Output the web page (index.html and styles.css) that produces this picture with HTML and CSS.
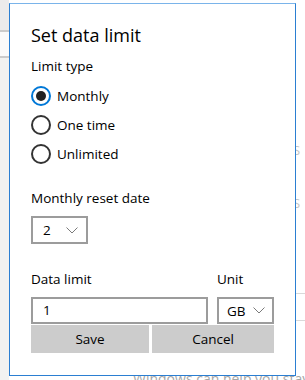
FILE: index.html
```html
<!DOCTYPE html>
<html lang="en">
<head>
    <meta charset="UTF-8">
    <meta name="viewport" content="width=device-width, initial-scale=1.0">
    <title>Set data limit</title>
    <link rel="stylesheet" href="styles.css">
</head>
<body>
    <div class="desktop">
        <div class="backdrop">
            <div class="bg-left">
                <div class="bg-band"></div>
                <div class="bg-line"></div>
                <div class="bg-white"></div>
                <div class="bg-line"></div>
                <div class="bg-rest"></div>
            </div>
            <div class="bg-right">
                <span class="ghost ghost-1">S</span>
                <span class="ghost ghost-2">S</span>
                <div class="rule rule-1"></div>
                <div class="rule rule-2"></div>
                <p class="bg-text">Windows can help you stay u</p>
            </div>
        </div>

        <div class="dialog">
            <h1>Set data limit</h1>

            <div class="label">Limit type</div>
            <div class="radios">
                <label class="radio checked"><span class="dot"></span>Monthly</label>
                <label class="radio"><span class="dot"></span>One time</label>
                <label class="radio"><span class="dot"></span>Unlimited</label>
            </div>

            <div class="label reset-label">Monthly reset date</div>
            <div class="select day-select">
                <span>2</span>
                <svg class="chevron" width="12" height="7" viewBox="0 0 12 7"><path d="M0.5 0.5 L6 6 L11.5 0.5" fill="none" stroke="#7a7a7a" stroke-width="1"/></svg>
            </div>

            <div class="limit-row labels">
                <div class="label">Data limit</div>
                <div class="label">Unit</div>
            </div>
            <div class="limit-row">
                <div class="textbox">1</div>
                <div class="select unit-select">
                    <span>GB</span>
                    <svg class="chevron" width="12" height="7" viewBox="0 0 12 7"><path d="M0.5 0.5 L6 6 L11.5 0.5" fill="none" stroke="#7a7a7a" stroke-width="1"/></svg>
                </div>
            </div>
            <div class="buttons">
                <button>Save</button>
                <button>Cancel</button>
            </div>
        </div>
    </div>
</body>
</html>
```

FILE: styles.css
```css
body {
    margin: 0;
    padding: 0;
    font-family: "Segoe UI", "Open Sans", sans-serif;
    color: #000;
}
.desktop {
    position: relative;
    width: 305px;
    height: 380px;
    overflow: hidden;
    background: #fff;
}
.backdrop {
    display: flex;
    height: 100%;
}
.bg-left {
    width: 9px;
    display: flex;
    flex-direction: column;
}
.bg-band {
    height: 30px;
    background: #ebebeb;
}
.bg-line {
    height: 2px;
    background: #cbcbcb;
}
.bg-white {
    height: 24px;
    background: #fafafa;
}
.bg-rest {
    flex: 1;
    background: #f1f2f1;
}
.bg-right {
    flex: 1;
    position: relative;
    background: #fff;
}
.ghost {
    position: absolute;
    left: 284px;
    font-size: 13px;
    color: #c4c4c4;
}
.ghost-1 { top: 141px; }
.ghost-2 { top: 194px; }
.rule {
    position: absolute;
    left: 0;
    right: 0;
    height: 1px;
    background: #d9d9d9;
}
.rule-1 { top: 293px; }
.rule-2 { top: 320px; }
.bg-text {
    position: absolute;
    left: 124px;
    top: 369px;
    margin: 0;
    font-size: 14px;
    color: #a6a6a6;
    white-space: nowrap;
}

.dialog {
    position: absolute;
    left: 9px;
    top: 3px;
    width: 243px;
    height: 333px;
    padding: 17px 21px 21px 21px;
    background: #fff;
    border: 1px solid #2b7fd2;
    border-top-color: #7ab4ea;
}
h1 {
    margin: 0;
    font-size: 18px;
    font-weight: normal;
    line-height: 28px;
}
.label {
    font-size: 13.5px;
    line-height: 20px;
}
h1 + .label {
    margin-top: 7px;
}
.radios {
    display: flex;
    flex-direction: column;
    gap: 9px;
    margin-top: 10px;
}
.radio {
    display: flex;
    align-items: center;
    gap: 6px;
    height: 20px;
    font-size: 13.5px;
}
.dot {
    width: 16px;
    height: 16px;
    border: 2px solid #333;
    border-radius: 50%;
    display: flex;
    align-items: center;
    justify-content: center;
}
.radio.checked .dot {
    border-color: #0078d7;
}
.radio.checked .dot::after {
    content: "";
    width: 10px;
    height: 10px;
    border-radius: 50%;
    background: #222;
}
.reset-label {
    margin-top: 24px;
}
.select {
    display: flex;
    align-items: center;
    justify-content: space-between;
    box-sizing: border-box;
    height: 28px;
    border: 2px solid #9c9c9c;
    font-size: 13.5px;
}
.day-select {
    width: 57px;
    margin-top: 8px;
    padding: 0 8px 0 10px;
}
.limit-row {
    display: grid;
    grid-template-columns: 1fr 57px;
    column-gap: 9px;
}
.limit-row.labels {
    margin-top: 25px;
    margin-bottom: 8px;
}
.textbox {
    box-sizing: border-box;
    height: 27px;
    border: 2px solid #9c9c9c;
    padding: 0 10px;
    font-size: 13.5px;
    line-height: 23px;
}
.unit-select {
    height: 27px;
    padding: 0 7px 0 8px;
}
.buttons {
    display: grid;
    grid-template-columns: 118px 1fr;
    column-gap: 3px;
    margin-top: 1px;
}
.buttons button {
    height: 28px;
    border: none;
    background: #cccccc;
    font-family: inherit;
    font-size: 13.5px;
    color: #000;
    padding: 0;
}
```
